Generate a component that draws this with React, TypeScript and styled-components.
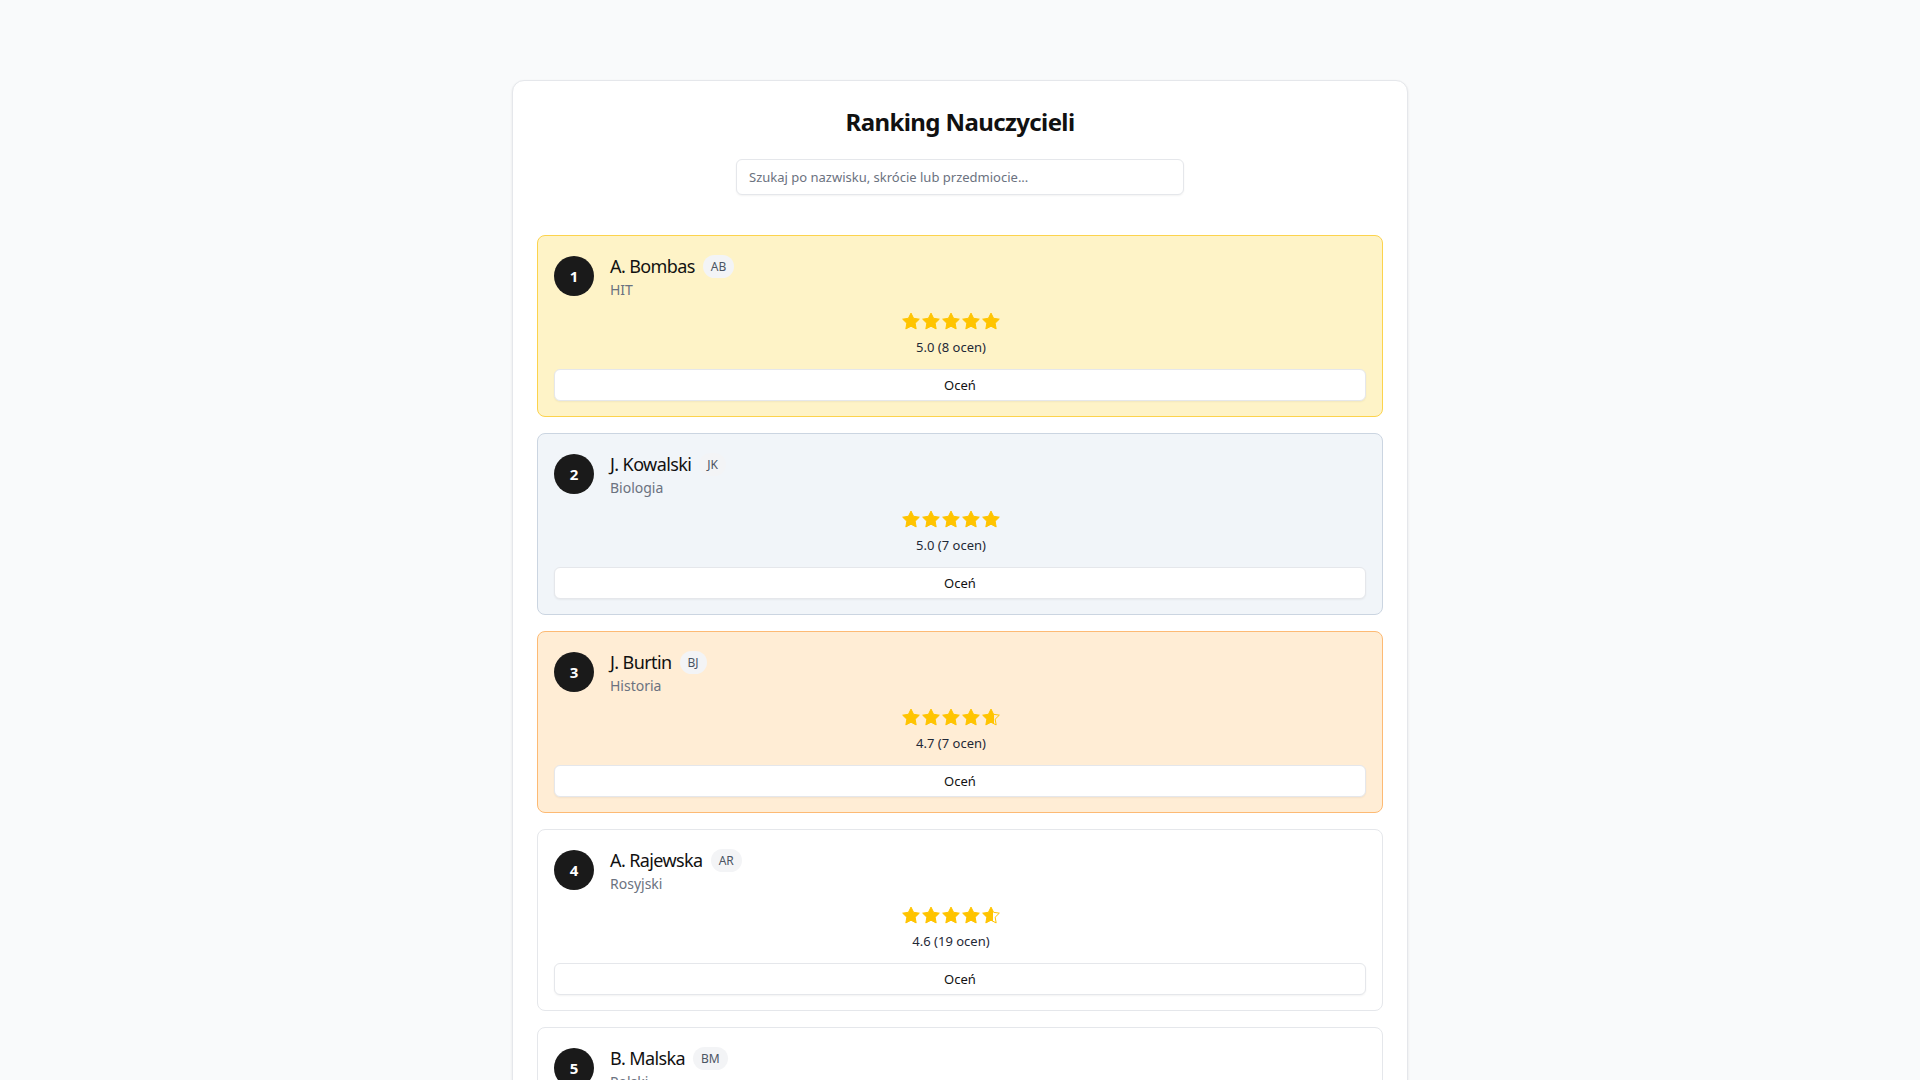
import React, { useState } from "react";
import styled, { createGlobalStyle } from "styled-components";

const GlobalStyle = createGlobalStyle`
  html, body {
    margin: 0;
    padding: 0;
    background: #f9fafb;
    font-family: "Noto Sans", "Open Sans", Arial, sans-serif;
    color: #111827;
  }
  * { box-sizing: border-box; }
`;

const Page = styled.div`
  padding: 80px 0 40px;
  display: flex;
  justify-content: center;
`;

const Panel = styled.main`
  width: 896px;
  background: #ffffff;
  border: 1px solid #e5e7eb;
  border-radius: 12px;
  box-shadow: 0 1px 3px rgba(0, 0, 0, 0.06), 0 1px 2px rgba(0, 0, 0, 0.04);
  padding: 24px;
  display: flex;
  flex-direction: column;
  align-items: center;
`;

const Title = styled.h1`
  margin: 1px 0 21px;
  font-size: 24px;
  line-height: 32px;
  font-weight: 700;
  letter-spacing: -0.6px;
  color: #111111;
`;

const Search = styled.input`
  width: 448px;
  height: 36px;
  padding: 0 12px;
  border: 1px solid #e5e7eb;
  border-radius: 6px;
  font-family: inherit;
  font-size: 13px;
  color: #111827;
  background: #fff;
  box-shadow: 0 1px 2px rgba(0, 0, 0, 0.05);
  outline: none;
  margin-bottom: 40px;
  &::placeholder {
    color: #6b7280;
  }
`;

const List = styled.div`
  width: 100%;
  display: flex;
  flex-direction: column;
  gap: 16px;
`;

type Tone = "gold" | "silver" | "bronze" | "plain";

const toneBg: Record<Tone, string> = {
  gold: "#fef3c7",
  silver: "#f1f5f9",
  bronze: "#ffedd5",
  plain: "#ffffff",
};
const toneBorder: Record<Tone, string> = {
  gold: "#fcd34d",
  silver: "#cbd5e1",
  bronze: "#fdba74",
  plain: "#e5e7eb",
};

const Card = styled.div<{ $tone: Tone }>`
  background: ${(p) => toneBg[p.$tone]};
  border: 1px solid ${(p) => toneBorder[p.$tone]};
  border-radius: 8px;
  padding: 16px 16px 15px;
  display: flex;
  flex-direction: column;
`;

const Header = styled.div`
  display: flex;
  align-items: center;
  gap: 16px;
`;

const Rank = styled.div`
  width: 40px;
  height: 40px;
  border-radius: 50%;
  background: #1a1a1a;
  color: #fff;
  font-weight: 700;
  font-size: 15px;
  display: flex;
  align-items: center;
  justify-content: center;
  flex-shrink: 0;
`;

const Info = styled.div`
  display: flex;
  flex-direction: column;
`;

const NameRow = styled.div`
  display: flex;
  align-items: center;
  gap: 8px;
`;

const Name = styled.span`
  font-size: 18px;
  line-height: 28px;
  letter-spacing: -0.6px;
  color: #111111;
`;

const Badge = styled.span`
  background: #f3f4f6;
  color: #4b5563;
  font-size: 12px;
  line-height: 15px;
  padding: 4px 8px;
  border-radius: 999px;
`;

const Subject = styled.span`
  font-size: 14px;
  line-height: 20px;
  color: #6b7280;
`;

const RatingBlock = styled.div`
  display: flex;
  flex-direction: column;
  align-items: center;
  margin-top: 11px;
  padding-right: 18px;
`;

const Stars = styled.div`
  display: flex;
  height: 20px;
`;

const RatingText = styled.div`
  margin-top: 6px;
  font-size: 13px;
  line-height: 20px;
  color: #1f2937;
`;

const RateButton = styled.button`
  margin-top: 12px;
  height: 32px;
  width: 100%;
  background: #fff;
  border: 1px solid #e5e7eb;
  border-radius: 6px;
  box-shadow: 0 1px 2px rgba(0, 0, 0, 0.05);
  font-family: inherit;
  font-size: 13px;
  color: #111111;
  cursor: pointer;
`;

const STAR = "12,2.5 15.09,8.76 22,9.77 17,14.64 18.18,21.52 12,18.27 5.82,21.52 7,14.64 2,9.77 8.91,8.76";

function Star({ fill, id }: { fill: number; id: string }) {
  const pct = Math.round(Math.max(0, Math.min(1, fill)) * 100);
  return (
    <svg width="20" height="20" viewBox="0 0 24 24">
      <defs>
        <linearGradient id={id} x1="2" x2="22" y1="0" y2="0" gradientUnits="userSpaceOnUse">
          <stop offset={`${pct}%`} stopColor="#ffc400" />
          <stop offset={`${pct}%`} stopColor="#ffc400" stopOpacity="0" />
        </linearGradient>
      </defs>
      <polygon points={STAR} fill={`url(#${id})`} stroke="#ffc400" strokeWidth="1.2" strokeLinejoin="round" />
    </svg>
  );
}

type Teacher = { name: string; code: string; subject: string; rating: number; count: number };

const teachers: Teacher[] = [
  { name: "A. Bombas", code: "AB", subject: "HIT", rating: 5.0, count: 8 },
  { name: "J. Kowalski", code: "JK", subject: "Biologia", rating: 5.0, count: 7 },
  { name: "J. Burtin", code: "BJ", subject: "Historia", rating: 4.7, count: 7 },
  { name: "A. Rajewska", code: "AR", subject: "Rosyjski", rating: 4.6, count: 19 },
  { name: "B. Malska", code: "BM", subject: "Polski", rating: 4.5, count: 12 },
];

const tones: Tone[] = ["gold", "silver", "bronze"];

export default function App() {
  const [q, setQ] = useState("");
  const shown = teachers.filter((t) =>
    (t.name + t.code + t.subject).toLowerCase().includes(q.toLowerCase())
  );
  return (
    <>
      <GlobalStyle />
      <Page>
        <Panel>
          <Title>Ranking Nauczycieli</Title>
          <Search
            placeholder="Szukaj po nazwisku, skrócie lub przedmiocie..."
            value={q}
            onChange={(e) => setQ(e.target.value)}
          />
          <List>
            {shown.map((t, i) => (
              <Card key={t.code} $tone={tones[i] ?? "plain"}>
                <Header>
                  <Rank>{i + 1}</Rank>
                  <Info>
                    <NameRow>
                      <Name>{t.name}</Name>
                      <Badge>{t.code}</Badge>
                    </NameRow>
                    <Subject>{t.subject}</Subject>
                  </Info>
                </Header>
                <RatingBlock>
                  <Stars>
                    {[0, 1, 2, 3, 4].map((s) => (
                      <Star key={s} id={`g-${t.code}-${s}`} fill={t.rating - s} />
                    ))}
                  </Stars>
                  <RatingText>
                    {t.rating.toFixed(1)} ({t.count} ocen)
                  </RatingText>
                </RatingBlock>
                <RateButton>Oceń</RateButton>
              </Card>
            ))}
          </List>
        </Panel>
      </Page>
    </>
  );
}
